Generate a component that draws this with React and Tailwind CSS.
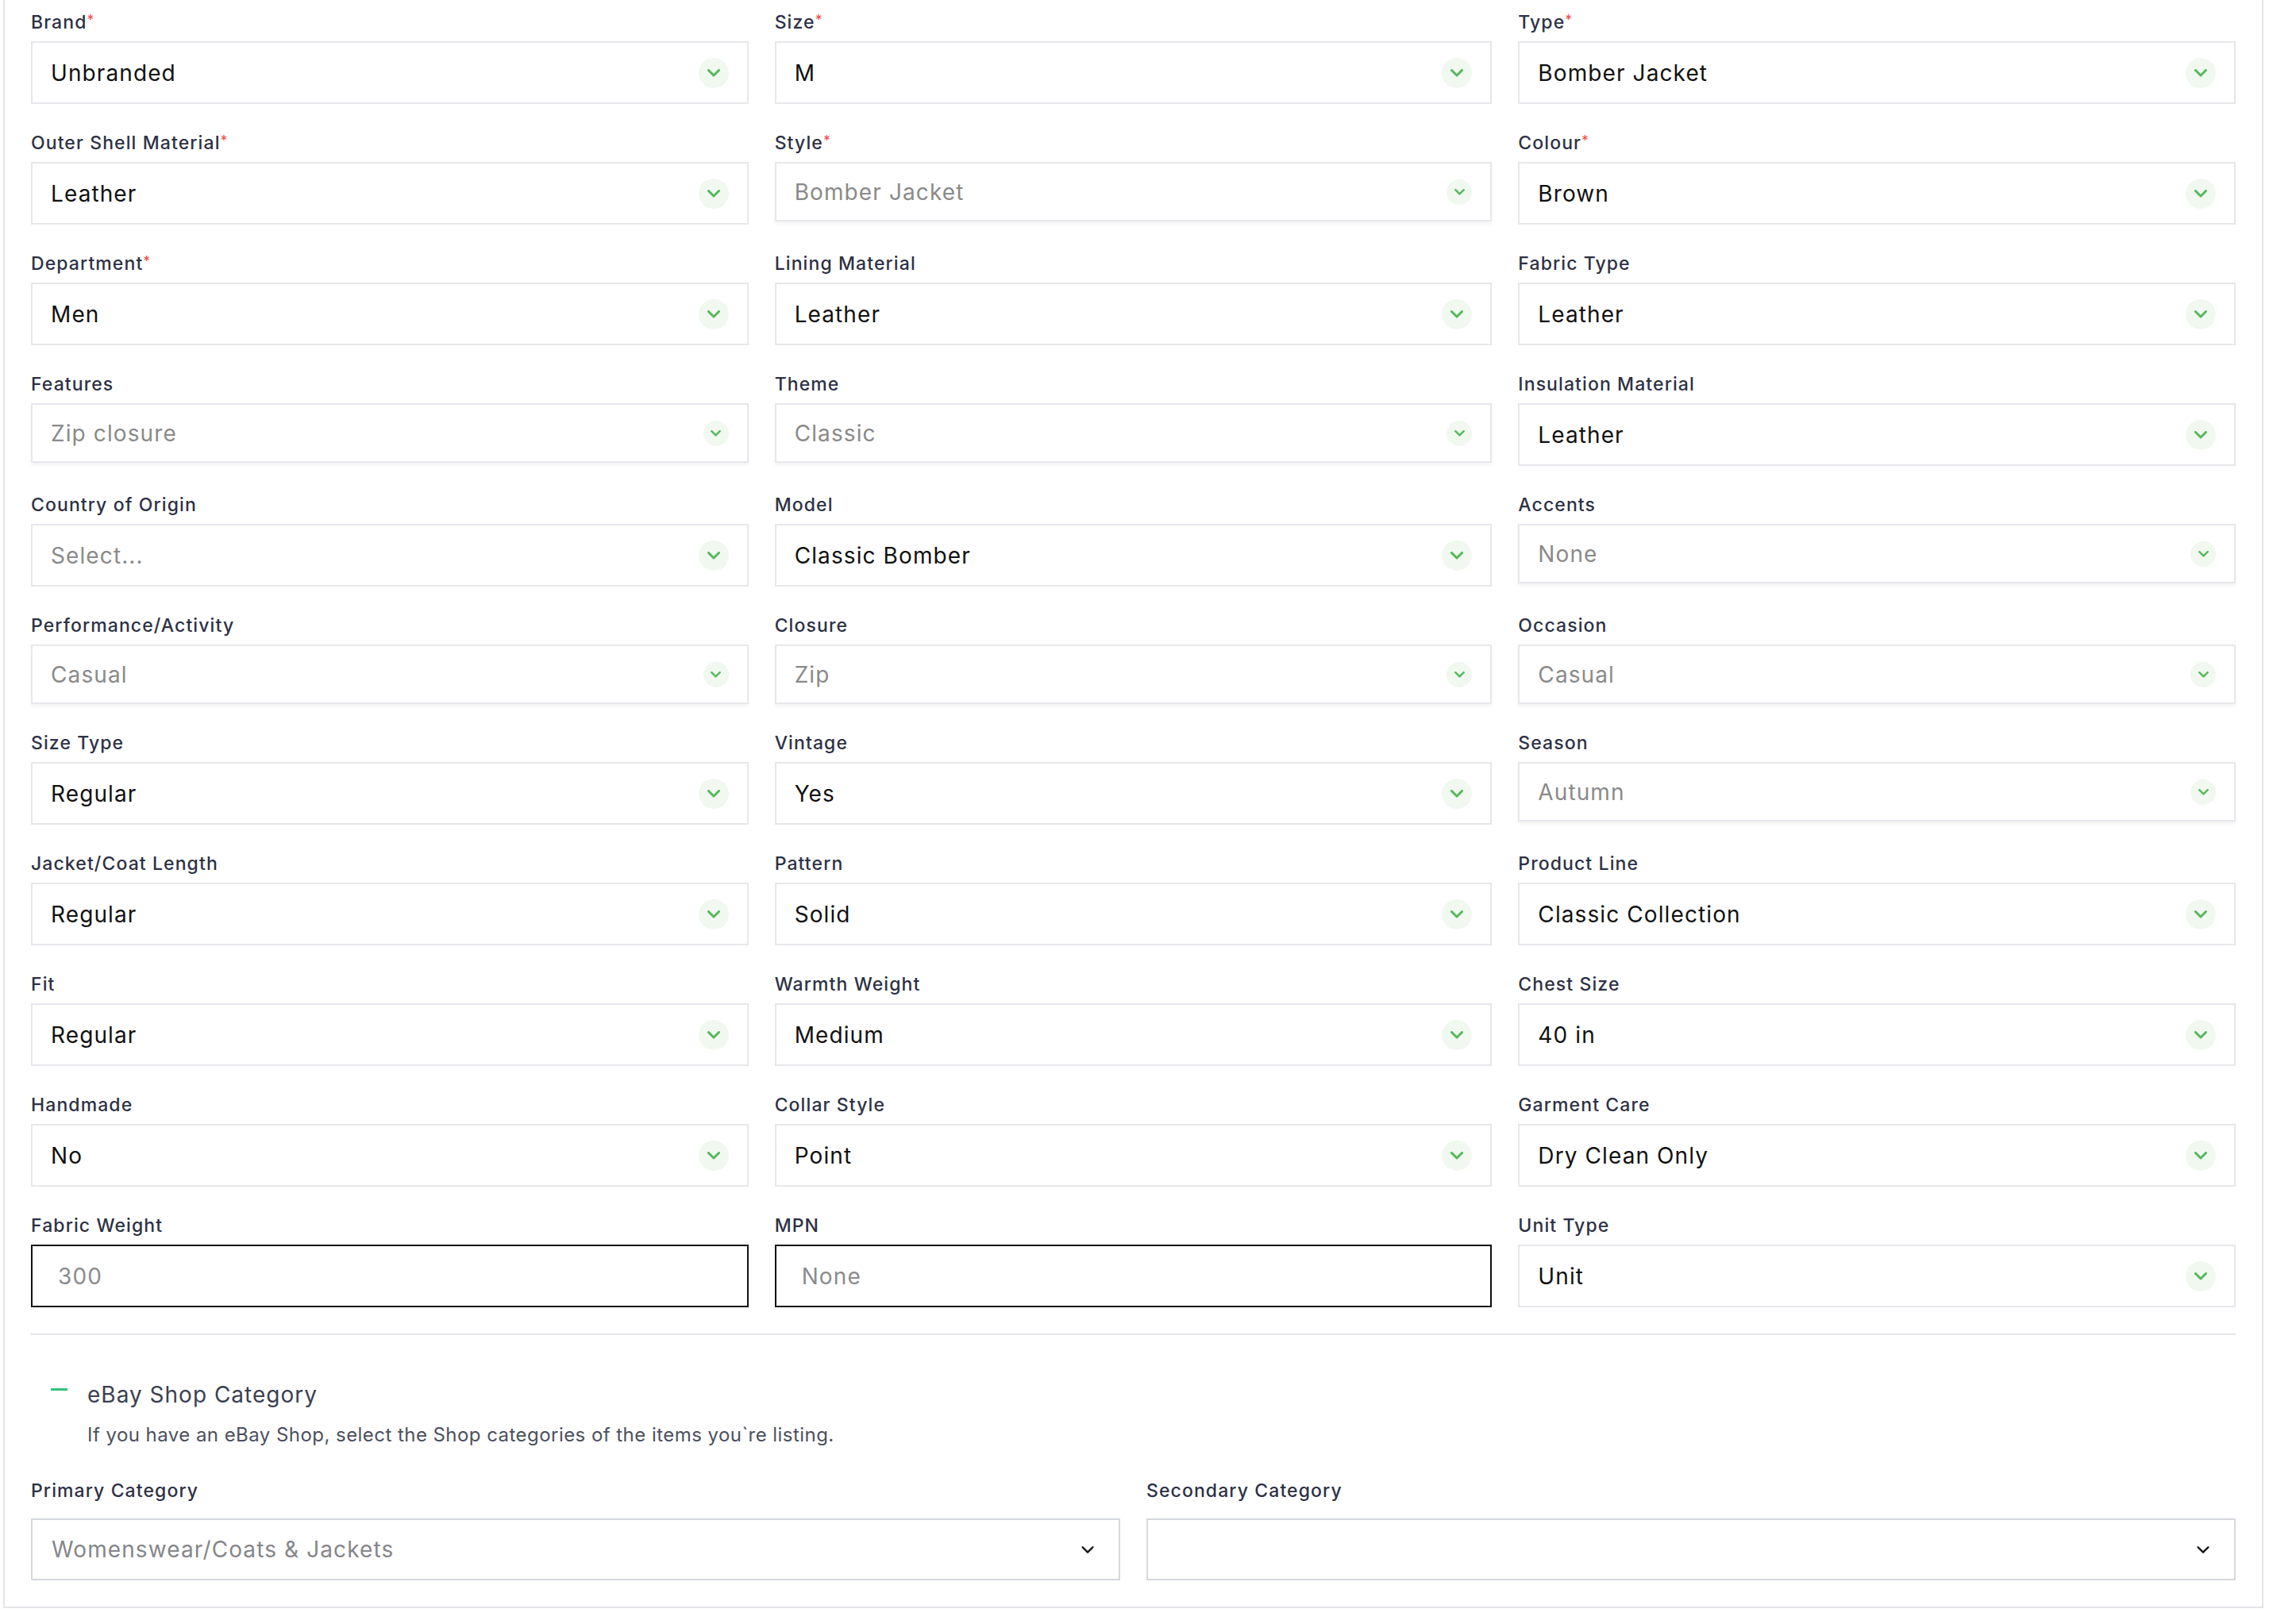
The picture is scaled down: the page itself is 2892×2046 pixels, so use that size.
import React from "react";

const N = "n"; // normal
const P = "p"; // placeholder-ish short select
const G = "g"; // normal height gray text
const I = "i"; // text input

const rows = [
  [["Brand", true, "Unbranded", N], ["Size", true, "M", N], ["Type", true, "Bomber Jacket", N]],
  [["Outer Shell Material", true, "Leather", N], ["Style", true, "Bomber Jacket", P], ["Colour", true, "Brown", N]],
  [["Department", true, "Men", N], ["Lining Material", false, "Leather", N], ["Fabric Type", false, "Leather", N]],
  [["Features", false, "Zip closure", P], ["Theme", false, "Classic", P], ["Insulation Material", false, "Leather", N]],
  [["Country of Origin", false, "Select...", G], ["Model", false, "Classic Bomber", N], ["Accents", false, "None", P]],
  [["Performance/Activity", false, "Casual", P], ["Closure", false, "Zip", P], ["Occasion", false, "Casual", P]],
  [["Size Type", false, "Regular", N], ["Vintage", false, "Yes", N], ["Season", false, "Autumn", P]],
  [["Jacket/Coat Length", false, "Regular", N], ["Pattern", false, "Solid", N], ["Product Line", false, "Classic Collection", N]],
  [["Fit", false, "Regular", N], ["Warmth Weight", false, "Medium", N], ["Chest Size", false, "40 in", N]],
  [["Handmade", false, "No", N], ["Collar Style", false, "Point", N], ["Garment Care", false, "Dry Clean Only", N]],
  [["Fabric Weight", false, "300", I], ["MPN", false, "None", I], ["Unit Type", false, "Unit", N]],
];

function Chevron({ small }) {
  return (
    <span
      className={
        small
          ? "flex h-[32px] w-[32px] shrink-0 items-center justify-center rounded-full bg-[#f0f8f0]"
          : "flex h-[38px] w-[38px] shrink-0 items-center justify-center rounded-full bg-[#f0f8f0]"
      }
    >
      <svg
        width={small ? 13 : 16}
        height={small ? 8 : 10}
        viewBox="0 0 16 10"
        fill="none"
        stroke="#57b85b"
        strokeWidth="3"
        strokeLinecap="round"
        strokeLinejoin="round"
      >
        <path d="M1.5 1.5 L8 8 L14.5 1.5" />
      </svg>
    </span>
  );
}

function Label({ text, req }) {
  return (
    <div className="mb-[8px] h-[32px] text-[23px] leading-[32px] font-medium tracking-[1.1px] text-[#2d3145]">
      {text}
      {req && <span className="align-top text-[17px] leading-[26px] text-[#f05252]">*</span>}
    </div>
  );
}

function Field({ label, req, value, kind }) {
  return (
    <div className="flex flex-col">
      <Label text={label} req={req} />
      {kind === I ? (
        <div className="flex h-[79px] items-center border-2 border-[#111111] bg-white pl-[32px]">
          <span className="text-[28px] tracking-[1.1px] text-[#8a8b8f]">{value}</span>
        </div>
      ) : kind === P ? (
        <div className="flex h-[75px] items-center justify-between border-2 border-[#e7e7ec] bg-white pl-[23px] pr-[23px] shadow-[0_3px_4px_rgba(0,0,0,0.05)]">
          <span className="text-[28px] tracking-[1.1px] text-[#8a8a8a]">{value}</span>
          <Chevron small />
        </div>
      ) : (
        <div className="flex h-[79px] items-center justify-between border-2 border-[#e7e7ec] bg-white pl-[23px] pr-[23px]">
          <span
            className={
              kind === G
                ? "text-[28px] tracking-[1.1px] text-[#8a8a8a]"
                : "text-[28px] tracking-[1.1px] text-[#111111]"
            }
          >
            {value}
          </span>
          <Chevron />
        </div>
      )}
    </div>
  );
}

function BlackChevron() {
  return (
    <svg width="22" height="22" viewBox="0 0 24 24" fill="none" stroke="#111111" strokeWidth="2.6" strokeLinecap="round" strokeLinejoin="round">
      <path d="M5 9l7 7 7-7" />
    </svg>
  );
}

export default function App() {
  return (
    <div className="h-[2046px] w-[2892px] overflow-hidden bg-white pl-[4px] font-['Inter',sans-serif]">
      <div className="w-[2847px] border-x-2 border-b-2 border-[#e4e5e9] px-[33px] pt-[12px] pb-[33px]">
        <div className="grid grid-cols-3 items-start gap-x-[33px] gap-y-[33px]">
          {rows.flat().map(([label, req, value, kind]) => (
            <Field key={label} label={label} req={req} value={value} kind={kind} />
          ))}
        </div>

        <div className="mt-[33px] h-[2px] bg-[#e4e5e9]" />

        <div className="mt-[55px] flex items-start">
          <div className="mt-[12px] ml-[25px] h-[3px] w-[21px] bg-[#34c07e]" />
          <div className="ml-[25px]">
            <div className="text-[28px] leading-[40px] tracking-[1px] text-[#3b3f50]">eBay Shop Category</div>
            <div className="mt-[14px] text-[24px] leading-[34px] tracking-[0.45px] text-[#4c505e]">
              If you have an eBay Shop, select the Shop categories of the items you`re listing.
            </div>
          </div>
        </div>

        <div className="mt-[37px] grid grid-cols-2 gap-x-[33px]">
          <div className="flex flex-col">
            <div className="mb-[19px] h-[32px] text-[23px] leading-[32px] font-medium tracking-[1.1px] text-[#2d3145]">
              Primary Category
            </div>
            <div className="flex h-[78px] items-center justify-between border-2 border-[#d5d8dc] bg-white pl-[24px] pr-[28px]">
              <span className="text-[28px] tracking-[1.1px] text-[#85868a]">Womenswear/Coats &amp; Jackets</span>
              <BlackChevron />
            </div>
          </div>
          <div className="flex flex-col">
            <div className="mb-[19px] h-[32px] text-[23px] leading-[32px] font-medium tracking-[1.1px] text-[#2d3145]">
              Secondary Category
            </div>
            <div className="flex h-[78px] items-center justify-end border-2 border-[#d5d8dc] bg-white pl-[24px] pr-[28px]">
              <BlackChevron />
            </div>
          </div>
        </div>
      </div>
    </div>
  );
}
